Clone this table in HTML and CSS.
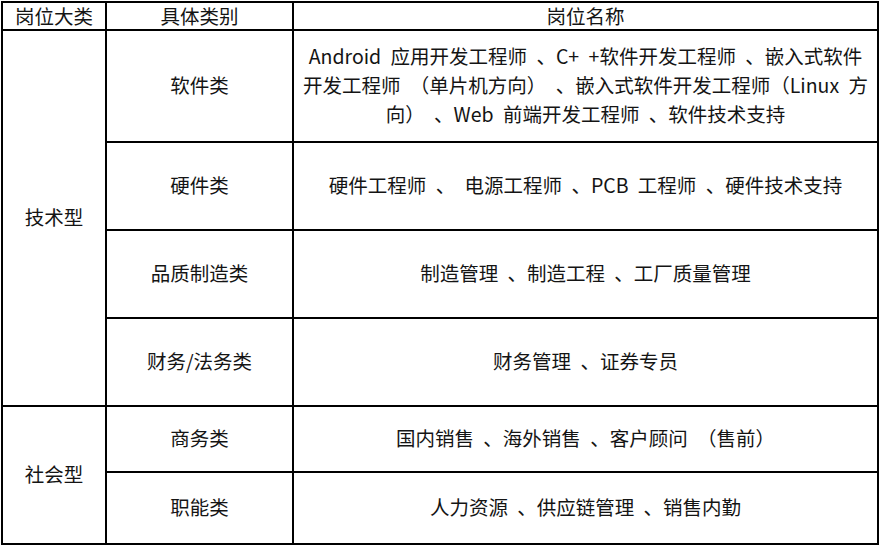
FILE: index.html
```html
<!DOCTYPE html>
<html lang="zh">
<head>
<meta charset="utf-8">
<link rel="stylesheet" href="styles.css">
</head>
<body>
<table class="jobs">
  <colgroup>
    <col class="c1">
    <col class="c2">
    <col class="c3">
  </colgroup>
  <tr class="head">
    <td>岗位大类</td>
    <td>具体类别</td>
    <td>岗位名称</td>
  </tr>
  <tr class="r1">
    <td rowspan="4">技术型</td>
    <td>软件类</td>
    <td>Android 应用开发工程师 、C+ +软件开发工程师 、嵌入式软件<br>开发工程师 （单片机方向） 、嵌入式软件开发工程师（Linux 方<br>向） 、Web 前端开发工程师 、软件技术支持</td>
  </tr>
  <tr class="r2">
    <td>硬件类</td>
    <td>硬件工程师 、 电源工程师 、PCB 工程师 、硬件技术支持</td>
  </tr>
  <tr class="r3">
    <td>品质制造类</td>
    <td>制造管理 、制造工程 、工厂质量管理</td>
  </tr>
  <tr class="r4">
    <td>财务/法务类</td>
    <td>财务管理 、证券专员</td>
  </tr>
  <tr class="r5">
    <td rowspan="2">社会型</td>
    <td>商务类</td>
    <td>国内销售 、海外销售 、客户顾问 （售前）</td>
  </tr>
  <tr class="r6">
    <td>职能类</td>
    <td>人力资源 、供应链管理 、销售内勤</td>
  </tr>
</table>
</body>
</html>
```
FILE: styles.css
```css
html, body {
  margin: 0;
  padding: 0;
  background: #ffffff;
}
body {
  padding: 1px 0 0 1px;
}
.jobs {
  border-collapse: collapse;
  table-layout: fixed;
  width: 876px;
  font-family: "Noto Sans CJK SC", sans-serif;
  font-size: 19.5px;
  word-spacing: 5px;
  color: #141414;
}
.c1 { width: 104px; }
.c2 { width: 187px; }
.c3 { width: 585px; }
.jobs td {
  border: 2px solid #000;
  text-align: center;
  vertical-align: middle;
  padding: 0 0 3px 0;
  line-height: 29px;
}
.head td { height: 26px; line-height: 26px; padding-bottom: 0; }
.r1 td { height: 107px; }
.r2 td, .r3 td, .r4 td { height: 83px; }
.r5 td { height: 61px; }
.r6 td { height: 67px; }
```
